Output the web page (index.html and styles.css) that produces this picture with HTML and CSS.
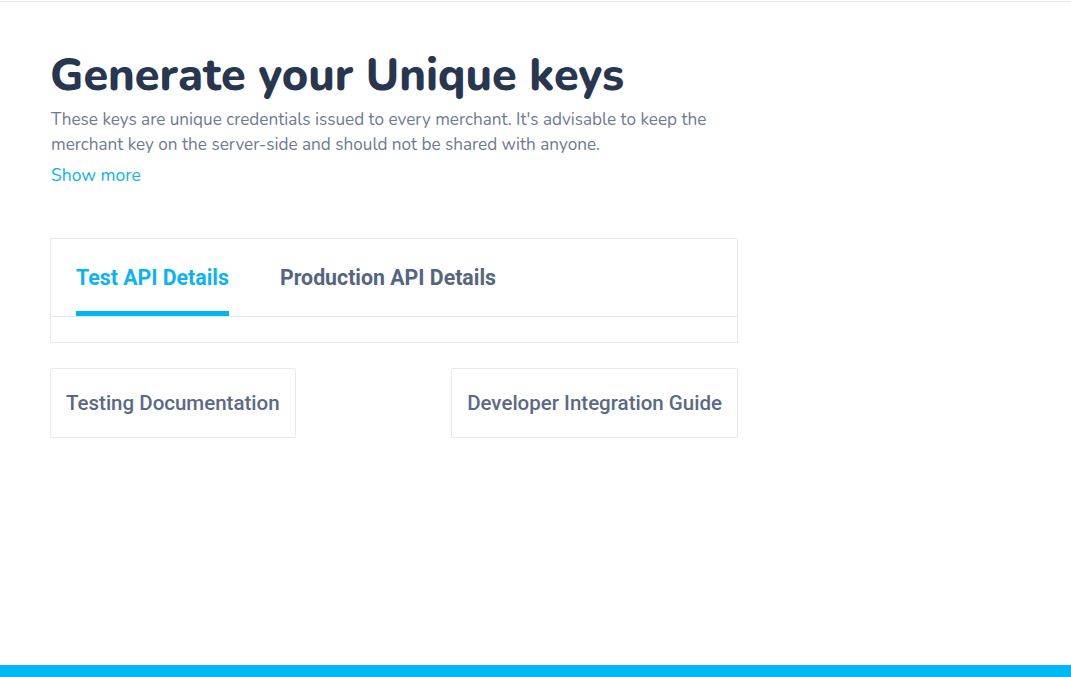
FILE: index.html
```html
<!DOCTYPE html>
<html lang="en">
<head>
<meta charset="utf-8">
<title>Generate your Unique keys</title>
<link rel="stylesheet" href="styles.css">
</head>
<body>
<div class="topline"></div>
<main class="page">
  <section class="content">
    <h1 class="title">Generate your Unique keys</h1>
    <p class="desc">These keys are unique credentials issued to every merchant. It's advisable to keep the merchant key on the server-side and should not be shared with anyone.</p>
    <a class="more" href="#">Show more</a>

    <div class="tabs-card">
      <div class="tabs">
        <div class="tab active">Test API Details</div>
        <div class="tab">Production API Details</div>
      </div>
      <div class="tab-body"></div>
    </div>

    <div class="links">
      <a class="link-box" href="#">Testing Documentation</a>
      <a class="link-box" href="#">Developer Integration Guide</a>
    </div>
  </section>
</main>
<div class="bottombar"></div>
</body>
</html>
```
FILE: styles.css
```css
html, body {
  margin: 0;
  padding: 0;
  height: 100%;
  background: #ffffff;
}
body {
  display: flex;
  flex-direction: column;
  font-family: Nunito, Lato, sans-serif;
}
.topline {
  height: 1px;
  margin-top: 1px;
  background: #e3e8ee;
}
.page {
  flex: 1;
}
.content {
  width: 688px;
  margin-left: 50px;
  padding-top: 46px;
}
.title {
  margin: 0;
  font-weight: 800;
  font-size: 45px;
  line-height: 56px;
  color: #283650;
}
.desc {
  margin: 3px 0 0 1px;
  font-size: 17.15px;
  font-weight: 400;
  line-height: 25px;
  color: #6e7a92;
  width: 680px;
}
.more {
  display: inline-block;
  margin: 6px 0 0 1px;
  font-size: 17.5px;
  line-height: 24px;
  color: #0db3ec;
  text-decoration: none;
}
.tabs-card {
  margin-top: 51px;
  border: 1px solid #e6eaf2;
}
.tabs {
  display: flex;
  gap: 51px;
  padding: 0 25px;
  height: 77px;
  border-bottom: 1px solid #e6eaf2;
}
.tab {
  display: flex;
  align-items: center;
  box-sizing: border-box;
  height: 77px;
  padding-top: 4px;
  font-family: Roboto, sans-serif;
  font-weight: 700;
  font-size: 21.3px;
  color: #56657f;
  border-bottom: 5px solid transparent;
}
.tab.active {
  color: #0cb3ee;
  border-bottom-color: #00b6f0;
}
.tab-body {
  height: 25px;
}
.links {
  display: flex;
  justify-content: space-between;
  margin-top: 25px;
}
.link-box {
  display: flex;
  align-items: center;
  box-sizing: border-box;
  height: 70px;
  padding: 0 15px;
  border: 1px solid #e6eaf2;
  border-radius: 2px;
  font-family: Roboto, sans-serif;
  font-weight: 500;
  font-size: 20.5px;
  color: #5a6987;
  text-decoration: none;
}
.bottombar {
  height: 12px;
  background: #00b9f5;
}
```
